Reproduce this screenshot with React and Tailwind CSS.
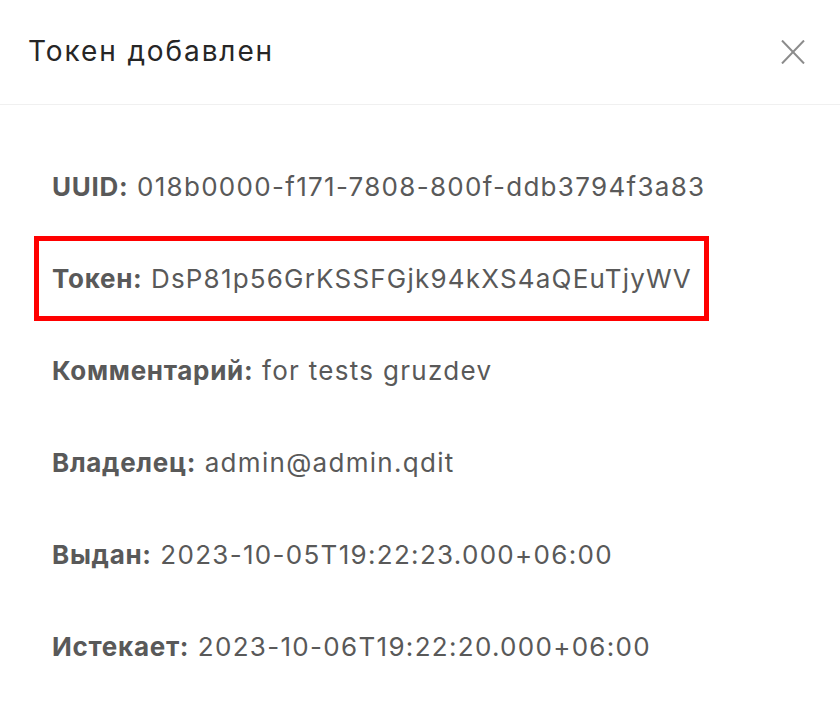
export default function App() {
    const rows = [
        { label: 'UUID:', value: '018b0000-f171-7808-800f-ddb3794f3a83' },
        { label: 'Токен:', value: 'DsP81p56GrKSSFGjk94kXS4aQEuTjyWV', marked: true },
        { label: 'Комментарий:', value: 'for tests gruzdev' },
        { label: 'Владелец:', value: 'admin@admin.qdit' },
        { label: 'Выдан:', value: '2023-10-05T19:22:23.000+06:00' },
        { label: 'Истекает:', value: '2023-10-06T19:22:20.000+06:00' },
    ];

    return (
        <div className="w-[840px] h-[713px] bg-white overflow-hidden" style={{ fontFamily: 'Inter, Roboto, sans-serif' }}>
            <div className="h-[105px] flex items-center justify-between pl-[28px] pr-[35px] border-b border-[#f0f0f0]">
                <h1 className="text-[28px] text-[#262626] leading-none tracking-[1.9px] -mt-[3px]">Токен добавлен</h1>
                <button className="w-[24px] h-[24px] flex items-center justify-center">
                    <svg width="24" height="24" viewBox="0 0 24 24" fill="none" stroke="#8c8c8c" strokeWidth="2">
                        <path d="M1 0.5 L23 23.5 M23 0.5 L1 23.5" />
                    </svg>
                </button>
            </div>
            <div className="pt-[35px]">
                {rows.map(row => {
                    if (row.marked) {
                        return (
                            <div key={row.label} className="h-[92px] flex items-center">
                                <div className="ml-[34px] w-[675px] h-[85px] border-[5px] border-[#ff0000] pl-[13px] flex items-center text-[26px] tracking-[1.2px] text-[#595959]">
                                    <span className="font-bold tracking-[0.7px]">{row.label}</span>&nbsp;{row.value}
                                </div>
                            </div>
                        )
                    }
                    return (
                        <div key={row.label} className="h-[92px] flex items-center pl-[52px] text-[26px] tracking-[1.3px] text-[#595959]">
                            <span className="font-bold tracking-[0.7px]">{row.label}</span>&nbsp;{row.value}
                        </div>
                    )
                })}
            </div>
        </div>
    )
}
